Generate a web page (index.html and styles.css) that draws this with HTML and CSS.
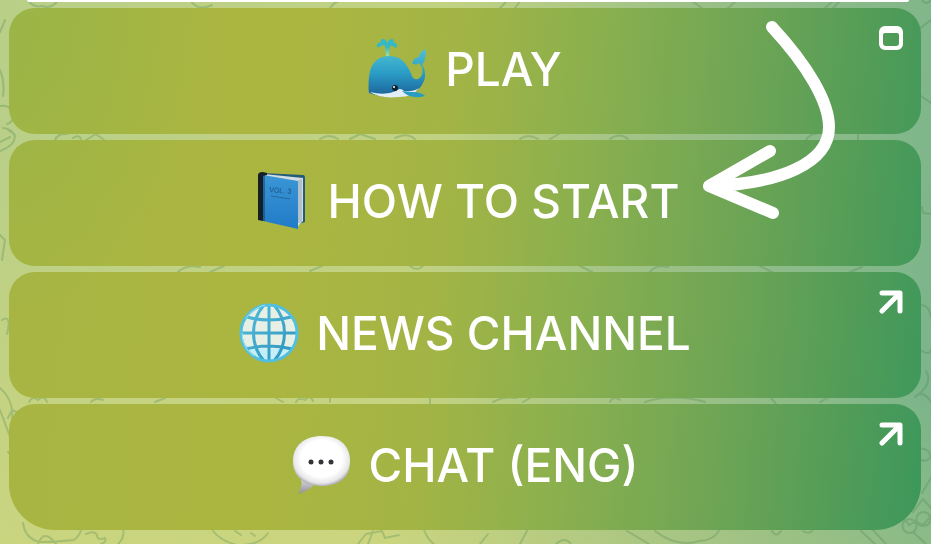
FILE: index.html
```html
<!DOCTYPE html>
<html lang="en">
<head>
<meta charset="utf-8">
<meta name="viewport" content="width=device-width, initial-scale=1">
<title>Bot menu</title>
<link rel="stylesheet" href="styles.css">
</head>
<body>
<svg class="wallpaper" viewBox="0 0 931 544" preserveAspectRatio="xMidYMid slice" aria-hidden="true">
  <g fill="none" stroke-width="2" stroke-linecap="round" stroke-linejoin="round">
    <path d="M28 0q5 8 14 6q8 3 15-4M190 0q8 12 22 5M330 8q6-8 14-8M500 8l8-8M515 8l6-8M690 0l12 8M728 8l9-8M825 8l9-8M833 8l8-8M922 0q4 6 9 0M919 29l12-9"/>
    <path d="M0 106q10-2 13 8q1 8-6 10M0 151q14-5 15-14q-2-8-12-9M0 142l10-5M7 129l8 6M55 140q3-7 12-6M73 138q6-4 8 1M86 140l10-6l8 6M320 139q9-6 18 0M350 139l10-5l15 5M395 138q12-6 20 1M520 139q8-6 18 0M550 139l9-5M610 139q10-7 18 0M806 140q4-6 10-6M858 134v6M921 96l10 7M922 207l1 6l8 1"/>
    <path d="M0 235l5 5l-3 20M178 272q8-8 22-5M210 272l14-6M310 271l12-5M410 266q7 6 13 0M580 266l12 6M650 272q6-8 18-5M760 266l14 7M850 272l12-5"/>
    <path d="M29 402q4-7 9-2q6-6 9 2M91 402q4-5 12-2M155 402l10-4M276 398l7 4M296 402q2-5 9-2q5-6 8 1M330 398v4M430 398v6M493 402q11-6 23-4M523 402l7-4M610 402q3-7 10-2M645 402q28-9 60 0M771 398l5 6M820 402l9-5M0 388q14 12 12 31M8 418l4-8l5 2l-3 9M0 410l12 32M8 452l12 12"/>
    <path d="M23 523q2 15 16 19q16 0 35-2q14-11-1-20M38 544q6-16 18 0M86 534q8-4 11 1q0 6 8 3q2 4-4 6M123 528q2 10-5 16M213 531q8 10 24 14q22 1 31-12M235 531l6 4M251 533l4 3M358 544l8-10l16-3l3 7l14-3M373 531l-5 13M424 530q4 10 10 14M480 544l8-10M520 544l7-13M556 544q9-8 15 0M627 531l22 13M655 531q22 17 44 10q13 0 20-10M772 531q4 7 9 0M803 531q6 4 10-1M861 531l14 13M872 529l14 15"/>
    <path d="M921 305q8 0 10 12M920 350q10 6 11 0M926 371q8 13-11 26M915 397q8-8 16 5M918 448q14 1 12 10q-6 5-10 1M922 493l9-15M913 512l10-13l8 9M903 517l6 8q7-5 14 0l8-9M909 519a7 7 0 1 0 1 0M923 512a7 7 0 1 0 1 0M914 533l12 11M0 70q5 12 3 26M5 20l-5 12M2 320q10-6 5 14"/>
  </g>
</svg>

<main class="chat">
  <div class="message"></div>
  <nav class="keyboard" aria-label="Menu">
    <button class="key" type="button">
      <svg class="emoji" viewBox="0 0 60 60" aria-hidden="true">
        <defs>
          <linearGradient id="whaleBody" x1="0" y1="0" x2="0" y2="1"><stop offset="0" stop-color="#4fc0d4"/><stop offset=".5" stop-color="#2b9dc6"/><stop offset="1" stop-color="#1b5f98"/></linearGradient>
          <linearGradient id="spray" x1="0" y1="0" x2="0" y2="1"><stop offset="0" stop-color="#25acc8"/><stop offset="1" stop-color="#b5e89e"/></linearGradient>
        </defs>
        <path d="M17 6h5l-1 13h-3z" fill="url(#spray)"/>
        <path d="M19 9q-2-3-5-3q-2 3-5 2q-1-4 4-5q-1-3 2-3q3 0 4 4q2-4 5-4q3 1 1 3q5 1 4 5q-2 2-4-1q-3-1-6 2z" fill="#35b9c6"/>
        <path d="M1 54Q0 48 1 38Q3 17 22 17q11 0 17 10q3 4 5 10q2 4 6 3q6-3 4-12l-3-4q-3 3-7 0q2-6 7-6q1-5 6-8q2 3 0 9q0 4-3 6q5 9 2 17q-4 10-15 14Q20 61 1 54z" fill="url(#whaleBody)"/>
        <path d="M2 53q15 4 26-1q4-4 8 0q9 1 15-3q-6 9-20 9Q12 60 2 53z" fill="#e4eff5"/>
        <path d="M34 52q6 1 11 1q8 0 12 4q-14 4-23-5z" fill="#299cc4"/>
        <circle cx="27" cy="49" r="3" fill="#10232e"/><circle cx="26" cy="48" r="1" fill="#fff"/>
      </svg>
      <span>PLAY</span>
      <svg class="badge" viewBox="0 0 24 24" aria-hidden="true"><path fill="#fff" fill-rule="evenodd" d="M6 0h12a6 6 0 0 1 6 6v12a6 6 0 0 1-6 6H6a6 6 0 0 1-6-6V6a6 6 0 0 1 6-6zM6 7a2 2 0 0 0-2 2v8a3 3 0 0 0 3 3h10a3 3 0 0 0 3-3V9a2 2 0 0 0-2-2z"/></svg>
    </button>

    <button class="key" type="button">
      <svg class="emoji" viewBox="0 0 60 60" aria-hidden="true">
        <defs>
          <linearGradient id="cover" x1="0" y1="0" x2="0" y2="1"><stop offset="0" stop-color="#3b96d5"/><stop offset="1" stop-color="#207bc8"/></linearGradient>
        </defs>
        <g transform="translate(2 -1)">
        <path d="M8 3l42 2q2 0 2 3v44l-6 2z" fill="#245a7c"/>
        <path d="M11 4l39 4v43l-5 5z" fill="#d4dde2"/>
        <path d="M48 9v43M46 10v43" stroke="#91a5b0" stroke-width="1"/>
        <path d="M10 5l35 6v48L10 51z" fill="url(#cover)"/>
        <path d="M5 5q0-3 5-3l4 1v2l-4 1v45l-5-1z" fill="#151f27"/>
        <path d="M11 6v45" stroke="#133f65" stroke-width="1"/>
        <text class="volume" x="16" y="22" transform="rotate(5 16 22)">VOL. 3</text>
        <path d="M18 26l19 3" stroke="#2368a0" stroke-width="1"/>
        </g>
      </svg>
      <span>HOW TO START</span>
    </button>

    <button class="key" type="button">
      <svg class="emoji" viewBox="0 0 60 60" aria-hidden="true">
        <defs><linearGradient id="gridline" x1="0" y1="0" x2="1" y2="1"><stop offset="0" stop-color="#55bfdc"/><stop offset="1" stop-color="#2b91bd"/></linearGradient></defs>
        <circle cx="30" cy="30" r="28" fill="#e8f0e5"/>
        <path d="M7 42q23 8 46 0q-9 15-23 16Q14 56 7 42z" fill="#c5eff8"/>
        <path d="M30 2v56M2 30h56M8 14q22 6 44 0M7 46q23-6 46 0M25 2C11 18 11 42 25 58M35 2C49 18 49 42 35 58" fill="none" stroke="url(#gridline)" stroke-width="3"/>
        <circle cx="30" cy="30" r="28" fill="none" stroke="#52bfdf" stroke-width="3"/>
        <path d="M7 15Q14 5 26 2M3 30Q3 45 15 53" fill="none" stroke="#9be5ef" stroke-width="1"/>
      </svg>
      <span>NEWS CHANNEL</span>
      <svg class="badge" viewBox="0 0 24 24" aria-hidden="true"><path d="M3 3h18v18M20 4L3 21" fill="none" stroke="#fff" stroke-width="5" stroke-linecap="round" stroke-linejoin="round"/></svg>
    </button>

    <button class="key" type="button">
      <svg class="emoji" viewBox="0 0 60 60" aria-hidden="true">
        <defs>
          <radialGradient id="bubble" cx=".5" cy=".45" r=".56"><stop offset=".65" stop-color="#fff"/><stop offset=".88" stop-color="#e7e7e9"/><stop offset="1" stop-color="#aaaaad"/></radialGradient>
          <linearGradient id="tail" x1="0" y1="0" x2="0" y2="1"><stop offset="0" stop-color="#d8d8dc"/><stop offset="1" stop-color="#8e8e96"/></linearGradient>
        </defs>
        <path d="M9 44q2 7-3 15q10-3 16-9z" fill="url(#tail)"/>
        <path d="M30 1C49 1 58 12 58 26C58 42 48 51 30 51C12 51 1 42 1 26C1 11 12 1 30 1z" fill="url(#bubble)"/>
        <g fill="#333338"><circle cx="19" cy="27" r="2.5"/><circle cx="29" cy="27" r="2.5"/><circle cx="39" cy="27" r="2.5"/></g>
      </svg>
      <span>CHAT (ENG)</span>
      <svg class="badge" viewBox="0 0 24 24" aria-hidden="true"><path d="M3 3h18v18M20 4L3 21" fill="none" stroke="#fff" stroke-width="5" stroke-linecap="round" stroke-linejoin="round"/></svg>
    </button>

    <svg class="pointer" viewBox="0 0 140 210" aria-hidden="true">
      <path d="M72 12C108 51 129 87 129 112C129 148 80 169 9 171M70 136L9 171L73 198" fill="none" stroke="#fff" stroke-width="12" stroke-linecap="round" stroke-linejoin="round"/>
    </svg>
  </nav>
</main>
</body>
</html>
```
FILE: styles.css
```css
* {
  box-sizing: border-box;
}

body {
  margin: 0;
  min-height: 100vh;
  background: linear-gradient(97deg, #b9cf88 0%, #c2d283 45%, #9bc087 70%, #79b48b 100%);
  font-family: Inter, "Liberation Sans", sans-serif;
}

body::before {
  content: "";
  position: fixed;
  inset: 0;
  background: linear-gradient(15deg, rgba(218, 218, 120, 0.5), rgba(218, 218, 120, 0) 50%);
}

.wallpaper {
  position: fixed;
  inset: 0;
  width: 100%;
  height: 100%;
  stroke: #47804a;
  stroke-opacity: 0.28;
}

.chat {
  position: relative;
  padding: 0 10px 14px 9px;
}

.message {
  height: 2px;
  margin: 0 12px 6px 18px;
  background: #fff;
  border-radius: 0 0 12px 12px;
}

.keyboard {
  position: relative;
  display: flex;
  flex-direction: column;
  gap: 6px;
}

.key {
  position: relative;
  display: flex;
  align-items: center;
  justify-content: center;
  gap: 17px;
  width: 100%;
  min-height: 126px;
  padding: 0 48px 4px;
  border: 0;
  border-radius: 26px;
  background:
    radial-gradient(ellipse 24% 60% at 0% 0%, rgba(132, 180, 76, 0.4), rgba(132, 180, 76, 0)) fixed,
    linear-gradient(95deg, #a7b543 0%, #abb640 30%, #a3b445 47%, #8bb04e 61%, #6fa555 77%, #529c58 90%, #3a975c 100%) fixed;
  color: #fff;
  font: 500 46px/58px Inter, "Liberation Sans", sans-serif;
  cursor: pointer;
}

.key:last-of-type {
  border-radius: 26px 26px 46px 46px;
}

.emoji {
  flex: none;
  width: 60px;
  height: 60px;
}

.volume {
  fill: #1e588b;
  font: 500 7px Inter, sans-serif;
}

.badge {
  position: absolute;
  top: 18px;
  right: 18px;
  width: 24px;
  height: 24px;
}

.pointer {
  position: absolute;
  top: 7px;
  right: 81px;
  width: 140px;
  height: 210px;
  pointer-events: none;
}
```
